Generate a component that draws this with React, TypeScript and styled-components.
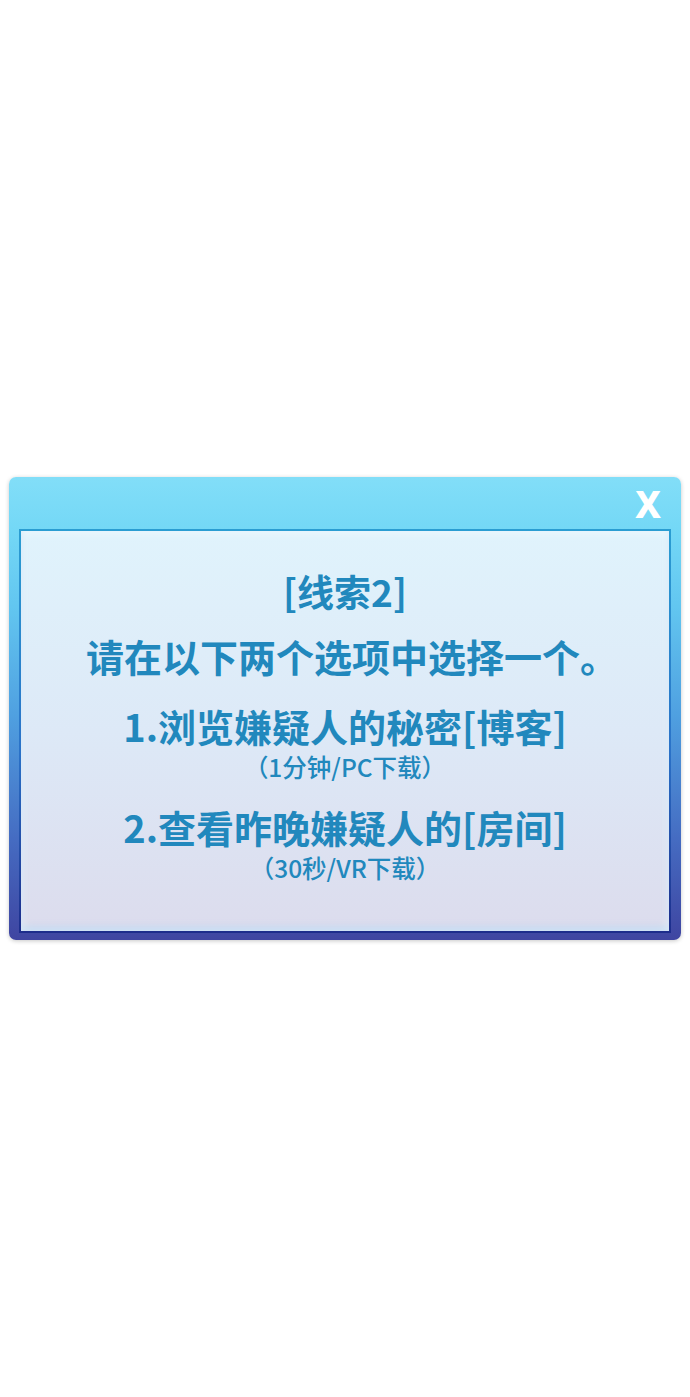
import React from "react";
import styled, { createGlobalStyle } from "styled-components";

const GlobalStyle = createGlobalStyle`
  html, body {
    margin: 0;
    padding: 0;
    background: #ffffff;
  }
  body {
    font-family: "Noto Sans CJK SC", "Noto Sans", sans-serif;
  }
`;

const Page = styled.div`
  width: 690px;
  height: 1397px;
  padding-top: 477px;
  box-sizing: border-box;
  display: flex;
  justify-content: center;
`;

const Window = styled.div`
  width: 672px;
  height: 463px;
  box-sizing: border-box;
  border-radius: 7px;
  padding: 0 10px 7px;
  display: flex;
  flex-direction: column;
  background: linear-gradient(
    180deg,
    #82def8 0%,
    #74d8f6 11%,
    #62c6f0 28%,
    #4f9fe0 52%,
    #456cc2 78%,
    #3f45a1 100%
  );
  box-shadow: 0 1px 4px rgba(0, 0, 0, 0.22);
`;

const TitleBar = styled.div`
  height: 52px;
  display: flex;
  align-items: center;
  justify-content: flex-end;
  padding-right: 10px;
`;

const CloseButton = styled.span`
  font-family: "Noto Sans", "DejaVu Sans", sans-serif;
  font-weight: 800;
  font-size: 37px;
  line-height: 1;
  color: #ffffff;
  margin-top: 1px;
`;

const Panel = styled.div`
  flex: 1;
  border: 2px solid;
  border-image: linear-gradient(180deg, #2a9dd2, #2a72c8 55%, #1d2d8c) 1;
  background: linear-gradient(180deg, #e0f3fc 0%, #dde9f7 50%, #dcdced 100%);
  box-shadow: inset 0 0 8px 2px rgba(255, 255, 255, 0.5),
    inset 0 -4px 6px rgba(150, 200, 240, 0.6);
  display: flex;
  flex-direction: column;
  align-items: center;
  padding-top: 38px;
  color: #2188bd;
`;

const Heading = styled.div<{ $gap?: number; $size?: number; $shift?: number }>`
  font-size: ${({ $size }) => $size ?? 38}px;
  line-height: 44px;
  font-weight: 700;
  margin-top: ${({ $gap }) => $gap ?? 0}px;
  padding-left: ${({ $shift }) => $shift ?? 0}px;
  white-space: nowrap;
`;

const Note = styled.div<{ $gap?: number }>`
  font-size: 24.5px;
  line-height: 28px;
  font-weight: 500;
  margin-top: ${({ $gap }) => $gap ?? 0}px;
  white-space: nowrap;
`;

export default function App() {
  return (
    <>
      <GlobalStyle />
      <Page>
        <Window>
          <TitleBar>
            <CloseButton>X</CloseButton>
          </TitleBar>
          <Panel>
            <Heading $size={37}>[线索2]</Heading>
            <Heading $gap={21} $shift={14}>请在以下两个选项中选择一个。</Heading>
            <Heading $gap={26}>1.浏览嫌疑人的秘密[博客]</Heading>
            <Note $gap={5}>（1分钟/PC下载）</Note>
            <Heading $gap={24}>2.查看昨晚嫌疑人的[房间]</Heading>
            <Note $gap={5}>（30秒/VR下载）</Note>
          </Panel>
        </Window>
      </Page>
    </>
  );
}
